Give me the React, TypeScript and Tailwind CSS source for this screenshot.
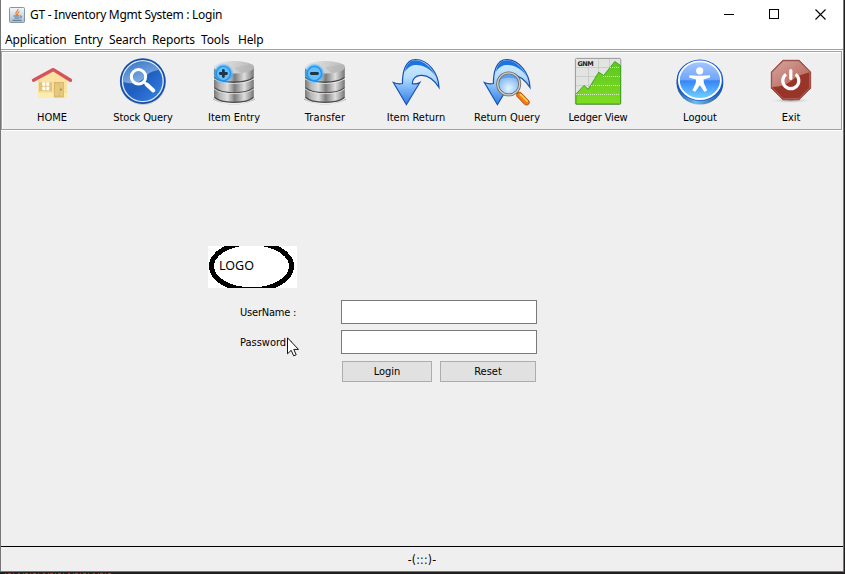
import React from "react";

const ui = "font-['DejaVu_Sans_Condensed','Noto_Sans',sans-serif] text-[11px] leading-[14px] whitespace-nowrap";

function Svg({ children }: { children: React.ReactNode }) {
  return (
    <svg width="60" height="52" viewBox="0 0 60 52" className="block shrink-0" fill="none">
      {children}
    </svg>
  );
}

function Home() {
  return (
    <Svg>
      <path d="M16 24 31 14 45 24V40q0 2-2 2H18q-2 0-2-2Z" fill="#fae3a0" />
      <path d="M16 37h29v3q0 2-2 2H18q-2 0-2-2Z" fill="#fdebb0" />
      <path d="M11.5 24.3 31.3 13.6 48.5 24.3" stroke="#d65459" strokeWidth="3.4" strokeLinecap="round" strokeLinejoin="round" />
      <rect x="17" y="26.3" width="13" height="9" fill="#e2c27a" />
      <rect x="20.3" y="26.3" width="7" height="8" fill="#fff" />
      <path d="M23.8 26v9M20 30.3h8" stroke="#e7c77c" strokeWidth="1" />
      <rect x="32.3" y="26.5" width="9" height="14.5" fill="#e6c97e" stroke="#d2ad5e" strokeWidth=".8" />
      <path d="M33 28h4.5v12H33" stroke="#d9b970" strokeWidth=".7" />
      <circle cx="39" cy="33.5" r=".9" fill="#a37c35" />
    </Svg>
  );
}

function StockQuery() {
  return (
    <Svg>
      <defs>
        <linearGradient id="sq" x1="0" y1="0" x2="1" y2="1">
          <stop offset="0" stopColor="#2b68bc" />
          <stop offset=".5" stopColor="#1f5fc0" />
          <stop offset="1" stopColor="#3c84ea" />
        </linearGradient>
        <linearGradient id="sqg" x1="0" y1="0" x2=".6" y2="1">
          <stop offset="0" stopColor="#3472c3" />
          <stop offset="1" stopColor="#8ab4e5" />
        </linearGradient>
      </defs>
      <circle cx="30" cy="26.1" r="23" fill="#9ba3b0" opacity=".5" />
      <circle cx="29.8" cy="25.2" r="22.9" fill="#164ea6" />
      <circle cx="29.8" cy="25.2" r="20.4" fill="url(#sq)" stroke="#d8e6f7" strokeWidth="1.4" />
      <path d="M10 26a19.8 19.8 0 0 1 36-12C38 15 34 18 30 23c-5 5-11 5-20 3Z" fill="url(#sqg)" />
      <circle cx="25.5" cy="20.8" r="7.2" stroke="#fff" strokeWidth="3" />
      <path d="m31 26 2.4 2.3" stroke="#fff" strokeWidth="2.6" />
      <path d="m33.8 28.5 6.500 6" stroke="#fff" strokeWidth="4" strokeLinecap="round" />
    </Svg>
  );
}

function Database({ plus, id }: { plus?: boolean; id: string }) {
  return (
    <Svg>
      <defs>
        <linearGradient id={id}>
          <stop offset="0" stopColor="#777" />
          <stop offset=".15" stopColor="#b8b8b8" />
          <stop offset=".34" stopColor="#ddd" />
          <stop offset=".52" stopColor="#7d7d7d" />
          <stop offset=".76" stopColor="#dedede" />
          <stop offset="1" stopColor="#757575" />
        </linearGradient>
        <linearGradient id={id + "t"}>
          <stop offset="0" stopColor="#e9e9e9" />
          <stop offset="1" stopColor="#b9b9b9" />
        </linearGradient>
        <radialGradient id={id + "b"}>
          <stop offset=".65" stopColor="#169cff" />
          <stop offset="1" stopColor="#5bbcff" stopOpacity="0" />
        </radialGradient>
      </defs>
      <path d="M9 42.500q21 12 42 0v1.300q-21 9-42 0Z" fill="#777" opacity=".5" />
      {[34, 24.5].map((y) => (
        <g key={y} transform={`translate(0 ${y})`}>
          <path d="M10 0q0-1 1-2h37.600q1.200 1 1.200 2v7.500c-6 7-33.800 7-39.800 0Z" fill={`url(#${id})`} />
          <path d="M10.500 7.300c7 6.700 32 6.700 39 0" stroke="#4c4c4c" strokeWidth="1.200" />
        </g>
      ))}
      <path d="M10 10.500v11.200c6 6.500 33.800 6.500 39.800 0V10.500Z" fill={`url(#${id})`} />
      <path d="M10.300 21.600c7 6.200 32 6.200 39.200 0" stroke="#444" strokeWidth="1.300" />
      <path d="M10.300 22.800c7 6.200 32 6.200 39.200 0M10.300 33c7 6.200 32 6.200 39.200 0" stroke="#eee" strokeWidth=".8" />
      <ellipse cx="29.900" cy="11.200" rx="19.900" ry="6.300" fill={`url(#${id}t)`} />
      <path d="m30 11.500 19-3.500c2 4-2 7.800-12 9.200Z" fill="#aaa" opacity=".35" />
      <circle cx="19.400" cy="17.500" r="10.500" fill={`url(#${id}b)`} />
      <circle cx="19.400" cy="17.500" r="7" fill="#6dbcf5" stroke="#1894f5" strokeWidth="1.100" />
      <path d={plus ? "M16.300 17.500h6.200M19.400 14.400v6.200" : "M16.300 17.500h6.200"} stroke="#17384f" strokeWidth="2.800" strokeLinecap="round" />
    </Svg>
  );
}

function Return({ search, id }: { search?: boolean; id: string }) {
  return (
    <Svg>
      <defs>
        <linearGradient id={id} x1="0" y1="0" x2="0" y2="1">
          <stop offset="0" stopColor="#d4edff" />
          <stop offset=".4" stopColor="#b1dcff" />
          <stop offset="1" stopColor="#2c7be6" />
        </linearGradient>
        <radialGradient id={id + "l"} cy=".7">
          <stop offset="0" stopColor="#e4f5ff" />
          <stop offset="1" stopColor="#8abcf2" />
        </radialGradient>
      </defs>
      <path d="M7.400 26.500q4.600 2 9 1C16.400 17 19 3.500 29.500 3.500 42 3.500 52.500 17 53 31.500 47.500 23 41 18.800 34.500 19.400c-6 .6-8 4-8.200 8.300q4 .8 7.500-1.200L20.400 48.700Z" fill={`url(#${id})`} stroke="#1750af" strokeWidth="1.200" />
      <path d="M18.800 16C20.500 8 24 4.200 29.500 4.200c9 0 17 8.800 20.800 17C44.500 12 36 8.300 29 9c-5 .5-7.500 3-10.200 7Z" fill="#1e74df" />
      {search && (
        <>
          <path d="m39.500 36.200 3.500 3.400" stroke="#777" strokeWidth="3" />
          <path d="m42.500 39.100 7 7.200" stroke="#ad4c13" strokeWidth="6.200" strokeLinecap="round" />
          <path d="m42.500 39.100 7 7.200" stroke="#f47b16" strokeWidth="4.700" strokeLinecap="round" />
          <path d="m43.500 38.500 6.700 6.700" stroke="#ffdc42" strokeWidth="1.600" strokeLinecap="round" />
          <circle cx="31.700" cy="27.900" r="11" fill={`url(#${id}l)`} stroke="#666" strokeWidth="2.900" />
          <circle cx="31.700" cy="27.900" r="11" stroke="#ccc" strokeWidth="1.300" />
          <path d="M23.500 23q2.500-4.500 8.500-4.500t8.300 4.500q-8-2.500-16.800 0Z" fill="#428df0" opacity=".65" />
        </>
      )}
    </Svg>
  );
}

function Ledger() {
  return (
    <Svg>
      <defs>
        <linearGradient id="lg" x1="0" y1="0" x2="0" y2="1">
          <stop offset="0" stopColor="#5cc624" />
          <stop offset="1" stopColor="#7fdd20" />
        </linearGradient>
      </defs>
      <rect x="7.400" y="2.400" width="45.400" height="46" rx="1.200" fill="#e2e4e2" stroke="#8f8f8f" strokeWidth=".9" />
      <path d="M8 11.500h44M8 20.500h44M8 29.500h44M20.500 11v27M30.500 3v27M41.500 3v20" stroke="#c6c8c6" strokeWidth=".8" />
      <path d="M8 38 16 29.500l4.300 3.800L30.700 16.200l5 3.300L46.800 5.500l5.700 4V47q0 1-1 1H8Z" fill="url(#lg)" stroke="#42a51c" strokeWidth="1" />
      <path d="M42 11.500h10M35 20.500h17M23 29.500h29M8 38.500h44" stroke="#d5f5b4" strokeWidth="1" strokeDasharray="1 1" />
      <text x="9.500" y="9.800" fill="#222" textLength="16" className="font-['DejaVu_Sans',sans-serif] text-[6.5px] font-bold">GNM</text>
    </Svg>
  );
}

function Logout() {
  return (
    <Svg>
      <defs>
        <linearGradient id="lo" x1="0" y1="0" x2="0" y2="1">
          <stop offset="0" stopColor="#a8c7ff" />
          <stop offset=".48" stopColor="#70a7fb" />
          <stop offset=".52" stopColor="#3785f7" />
          <stop offset="1" stopColor="#72d4ff" />
        </linearGradient>
        <linearGradient id="lor">
          <stop offset="0" stopColor="#15539f" />
          <stop offset=".4" stopColor="#75bbe7" />
          <stop offset="1" stopColor="#16529c" />
        </linearGradient>
      </defs>
      <ellipse cx="29.900" cy="27.200" rx="23.400" ry="21.300" fill="url(#lor)" />
      <ellipse cx="29.900" cy="24.200" rx="23.300" ry="20.600" fill="#1557dd" />
      <ellipse cx="29.900" cy="24.200" rx="21" ry="18.800" fill="url(#lo)" stroke="#fff" strokeWidth="1.800" />
      <circle cx="29.700" cy="14.800" r="3.600" fill="#fff" />
      <path d="m19.500 19.300 7.500.4h5.500l7.500-.4v2.200l-6.500 2 .5 4 3.200 7-2.800 1.300-4.600-6.600-4.600 6.600-2.800-1.300 3.200-7 .5-4-7.100-2Z" fill="#fff" />
    </Svg>
  );
}

function Exit() {
  return (
    <Svg>
      <defs>
        <linearGradient id="ex" x1="0" y1="0" x2="1" y2="1">
          <stop offset="0" stopColor="#d6a6a0" />
          <stop offset="1" stopColor="#b45c50" />
        </linearGradient>
        <radialGradient id="exs">
          <stop offset="0" stopColor="#999" />
          <stop offset="1" stopColor="#eee" stopOpacity="0" />
        </radialGradient>
      </defs>
      <ellipse cx="30" cy="44.500" rx="22" ry="2.800" fill="url(#exs)" />
      <path d="M21.800 4.300h16.400L49.700 16v16.200L38.200 43.700H21.800L10.300 32.200V16Z" fill="#993428" stroke="#843d35" strokeWidth=".8" />
      <path d="M22.300 5h15.400L49 16.300C44 18 39 18.500 34 22c-7 6-14 9-23 9V16.300Z" fill="url(#ex)" />
      <path d="M22.200 5.300h15.600L48.700 16.400v15.400L37.800 42.700H22.200L11.300 31.800V16.400Z" stroke="#bd7a72" strokeWidth=".7" />
      <path d="M25 18.300a8 8 0 1 0 9.600 0" stroke="#fff" strokeWidth="3.200" />
      <path d="M29.800 14.500v8" stroke="#fff" strokeWidth="3.200" strokeLinecap="round" />
    </Svg>
  );
}

function Tool({ icon, label, track = "" }: { icon: React.ReactNode; label: string; track?: string }) {
  return (
    <button className={`flex w-[60px] shrink-0 flex-col items-center ${ui} ${track}`}>
      {icon}
      <span className="mt-[3px]">{label}</span>
    </button>
  );
}

const menus = [
  { label: "Application", cls: "w-[69px]" },
  { label: "Entry", cls: "w-[35px]" },
  { label: "Search", cls: "w-[43px]" },
  { label: "Reports", cls: "w-[49px]" },
  { label: "Tools", cls: "w-[37px]" },
  { label: "Help", cls: "w-[30px]" },
];

export default function App() {
  return (
    <div className="flex h-[574px] w-[845px] flex-col overflow-hidden bg-[#211f20] text-black">
      <div className="flex h-[572px] w-[844px] shrink-0 flex-col border-r border-b border-l border-[#777] bg-[#efefef]">
        <header className="flex h-[29px] shrink-0 items-center bg-white pl-2">
          <svg width="16" height="16" viewBox="0 0 16 16" fill="none" className="block">
            <defs>
              <linearGradient id="jv" x1="0" y1="0" x2="0" y2="1">
                <stop stopColor="#f5f8fa" />
                <stop offset="1" stopColor="#aebdca" />
              </linearGradient>
            </defs>
            <rect x=".5" y=".5" width="15" height="15" rx="1" fill="url(#jv)" stroke="#8496a5" />
            <path d="M9 2c.5 2-3 3-2 5l1 1.500M10.500 4.500c-2.500 1-1 2-2 3.500" stroke="#ed7a25" strokeWidth="1.200" />
            <path d="M4.500 9h6M5.500 11h5M3.500 13.300h9M11 9c2-.5 2 1.500 0 2" stroke="#4c7590" strokeWidth="1" />
          </svg>
          <h1 className="ml-[5px] font-['Noto_Sans','Open_Sans',sans-serif] text-[12px] leading-4 tracking-[-0.28px] whitespace-nowrap">GT - Inventory Mgmt System : Login</h1>
          <div className="ml-auto flex items-center gap-[35px] pr-[17px]">
            <svg width="10" height="11" className="block"><path d="M0 5.500h10" stroke="#000" /></svg>
            <svg width="11" height="11" className="block"><rect x=".5" y=".5" width="9" height="9" fill="none" stroke="#000" /></svg>
            <svg width="11" height="11" className="block"><path d="m.5.500 10 10M10.500.500l-10 10" stroke="#000" strokeWidth="1.100" /></svg>
          </div>
        </header>
        <nav className="flex h-[21px] shrink-0 items-center border-b border-[#a0a0a0] bg-white pt-0.5 pl-1 font-['Noto_Sans','Open_Sans',sans-serif] text-[12px] leading-4 tracking-[-0.15px]">
          {menus.map((m) => (
            <button key={m.label} className={`shrink-0 text-left whitespace-nowrap ${m.cls}`}>{m.label}</button>
          ))}
        </nav>
        <div className="flex h-[81px] shrink-0 border-t border-r border-b border-white">
          <div className="flex flex-1 gap-[31px] border border-[#a0a0a0] pt-1 pl-5 shadow-[inset_1px_1px_0_#fff]">
            <Tool icon={<Home />} label="HOME" />
            <Tool icon={<StockQuery />} label="Stock Query" track="tracking-[-0.1px]" />
            <Tool icon={<Database plus id="db1" />} label="Item Entry" />
            <Tool icon={<Database id="db2" />} label="Transfer" track="tracking-[0.1px]" />
            <Tool icon={<Return id="re1" />} label="Item Return" />
            <Tool icon={<Return search id="re2" />} label="Return Query" />
            <Tool icon={<Ledger />} label="Ledger View" track="tracking-[-0.15px]" />
            <div className="ml-[11px] flex gap-[31px]">
              <Tool icon={<Logout />} label="Logout" />
              <Tool icon={<Exit />} label="Exit" />
            </div>
          </div>
        </div>
        <main className="flex-1 pt-[115px] pl-[207px]">
          <svg width="89" height="42" viewBox="0 0 89 42" className="block bg-white">
            <ellipse cx="43.500" cy="20.300" rx="40" ry="23.500" fill="none" stroke="#000" strokeWidth="5" shapeRendering="crispEdges" />
            <text x="11" y="24" textLength="35" className="font-['Noto_Sans',sans-serif] text-[12.5px]">LOGO</text>
          </svg>
          <form className={`relative mt-3 ml-8 w-[297px] ${ui}`} onSubmit={(e) => e.preventDefault()}>
            <div className="flex items-center">
              <label htmlFor="user" className="w-[101px] pt-0.5 tracking-[-0.2px]">UserName :</label>
              <input id="user" className="h-6 w-[196px] border border-[#7a7a7a] bg-white px-1" />
            </div>
            <div className="mt-1.5 flex items-center">
              <label htmlFor="pass" className="w-[101px] pt-0.5">Password :</label>
              <input id="pass" type="password" className="h-6 w-[196px] border border-[#7a7a7a] bg-white px-1" />
            </div>
            <div className="mt-[7px] ml-[102px] flex gap-2">
              <button className="h-[21px] w-[90px] border border-[#adadad] bg-[#e1e1e1]">Login</button>
              <button className="h-[21px] w-[96px] border border-[#adadad] bg-[#e1e1e1]">Reset</button>
            </div>
            <svg width="12" height="20" viewBox="0 0 12 20" className="absolute top-[37px] left-[47px]">
              <path d="M.5.800v16l3.700-3.500 2.500 5.500 2.500-1-2.400-5.400h4.700Z" fill="#fff" stroke="#111" strokeWidth="1" />
            </svg>
          </form>
        </main>
        <footer className={`flex h-[25px] shrink-0 items-center justify-center border-t border-black ${ui} pt-px text-[12px] tracking-[0.2px]`}>-(:::)-</footer>
      </div>
      <svg width="844" height="2" className="block shrink-0">
        <path d="M5 1.500h108" stroke="#a83a32" strokeWidth="1" strokeDasharray="1 2 3 2 1 4 2 3 1 1 3 2" />
      </svg>
    </div>
  );
}
